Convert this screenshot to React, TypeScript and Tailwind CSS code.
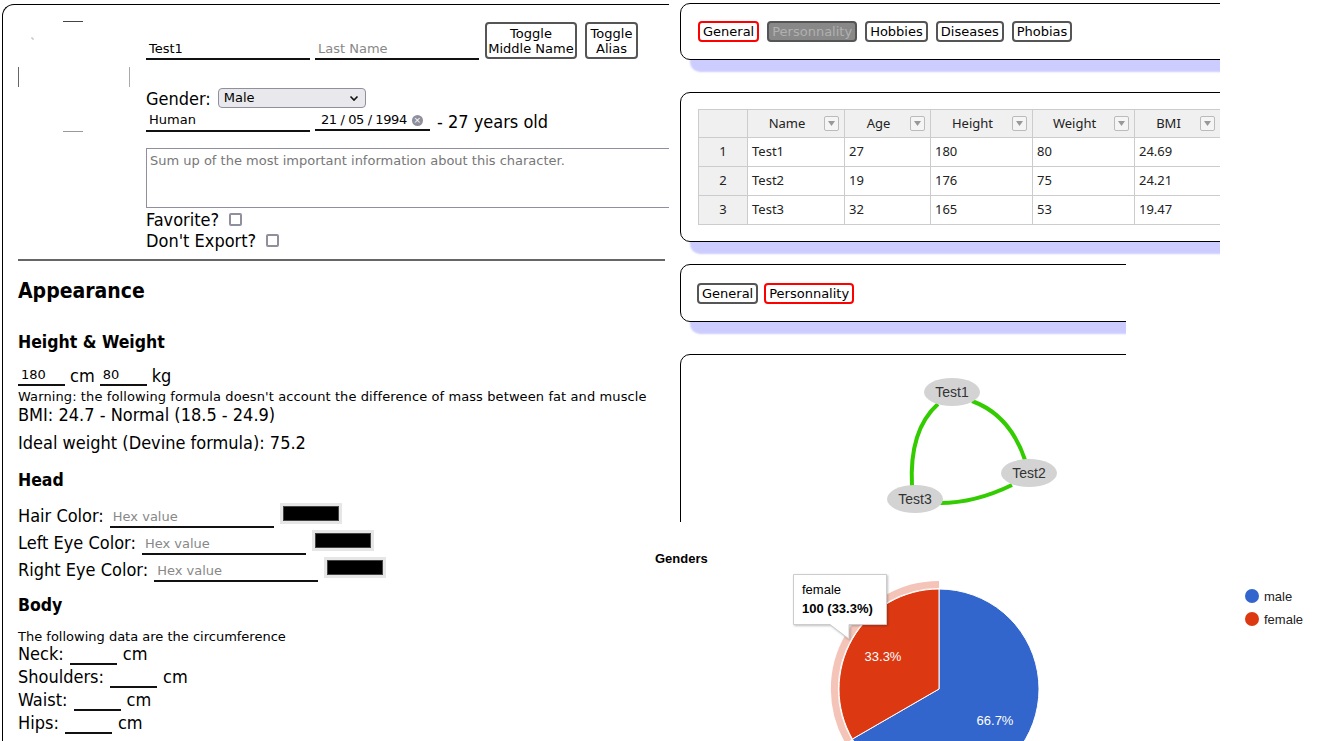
import React from "react";

const ui = "font-['DejaVu_Sans_Condensed','DejaVu_Sans',sans-serif]";
const small = "font-['DejaVu_Sans',sans-serif] text-[13px]";

const people = [
  { id: 1, name: "Test1", age: 27, height: 180, weight: 80, bmi: "24.69" },
  { id: 2, name: "Test2", age: 19, height: 176, weight: 75, bmi: "24.21" },
  { id: 3, name: "Test3", age: 32, height: 165, weight: 53, bmi: "19.47" },
];

export default function App() {
  return (
    <div className={`relative h-[741px] w-[1323px] overflow-hidden bg-white text-black ${ui}`}>
      <div className="flex items-start">
        <CharacterSheet />
        <div className="ml-[11px] flex flex-col">
          <div className="w-[540px] overflow-hidden">
            <Panel className="mt-[3px] h-[57px] items-center gap-[8px] pl-[17px]">
              <Tab active>General</Tab>
              <Tab disabled>Personnality</Tab>
              <Tab>Hobbies</Tab>
              <Tab>Diseases</Tab>
              <Tab>Phobias</Tab>
            </Panel>
            <Panel className="mt-[32px] mb-[22px] h-[150px] items-start pl-[17px] pt-[16px]">
              <PeopleTable />
            </Panel>
          </div>
          <div className="w-[446px] overflow-hidden">
            <Panel className="h-[58px] items-center gap-[6px] pl-[16px]">
              <Tab>General</Tab>
              <Tab active>Personnality</Tab>
            </Panel>
            <Panel className="mt-[32px] h-[200px] items-start">
              <RelationGraph />
            </Panel>
          </div>
        </div>
      </div>
      <GenderChart />
    </div>
  );
}

function Panel({ className, children }: { className: string; children: React.ReactNode }) {
  return (
    <div className={`flex w-[700px] rounded-l-[10px] border border-black bg-white shadow-[10px_12px_2px_#ccccff] ${className}`}>
      {children}
    </div>
  );
}

function Tab({ children, active = false, disabled = false }: { children: React.ReactNode; active?: boolean; disabled?: boolean }) {
  const tone = active
    ? "border-[#ff0000] bg-white text-black"
    : disabled
      ? "border-[#555] bg-[#888] text-[#b0b0b0]"
      : "border-[#555] bg-white text-black";
  return (
    <span className={`h-[21px] rounded-[4px] border-2 px-[3px] leading-[17px] ${small} ${tone}`}>
      {children}
    </span>
  );
}

function CharacterSheet() {
  return (
    <div className="ml-[2px] mt-[4px] h-[737px] w-[667px] shrink-0 overflow-hidden rounded-tl-[12px] border-l border-t border-black pl-[15px] text-[18px]">
      <div className="flex">
        <Avatar />
        <div className="ml-[16px] w-[600px] shrink-0">
          <div className="mt-[17px] flex h-[38px] items-end">
            <LineInput width="w-[164px]" value="Test1" />
            <LineInput width="ml-[5px] w-[164px]" placeholder="Last Name" />
            <button className={`ml-[6px] h-[37px] w-[92px] self-start rounded-[4px] border-2 border-[#555] bg-white leading-[15px] ${small}`}>
              Toggle
              <br />
              Middle Name
            </button>
            <button className={`ml-[8px] h-[37px] w-[53px] self-start rounded-[4px] border-2 border-[#555] bg-white leading-[15px] ${small}`}>
              Toggle
              <br />
              Alias
            </button>
          </div>
          <div className="mt-[28px] flex h-[20px] items-center">
            <span>Gender:</span>
            <div className={`ml-[7px] flex h-[20px] w-[148px] items-center justify-between rounded-[4px] border border-[#8f8f9d] bg-[#e9e9ed] pl-[5px] pr-[6px] ${small}`}>
              <span>Male</span>
              <svg width="10" height="7" viewBox="0 0 10 7">
                <path d="M1.5 1.5 L5 5 L8.5 1.5" fill="none" stroke="#111" strokeWidth="1.6" />
              </svg>
            </div>
          </div>
          <div className="mt-[3px] flex h-[20px] items-center">
            <LineInput width="w-[164px]" value="Human" />
            <div className={`ml-[5px] flex h-[20px] w-[115px] items-center border-b-2 border-[#111] pl-[6px] ${small}`}>
              <span className="whitespace-pre tracking-[-0.4px]">21 / 05 / 1994</span>
              <span className="ml-[5px] flex h-[11px] w-[11px] items-center justify-center rounded-full bg-[#8f8f9d] text-[9px] leading-none text-white">×</span>
            </div>
            <span className="ml-[7px]">- 27 years old</span>
          </div>
          <div className={`mt-[17px] h-[60px] w-[600px] border border-[#8f8f9d] px-[3px] py-[2px] text-[#777] ${small}`}>
            Sum up of the most important information about this character.
          </div>
          <div className="mt-[1px] flex h-[21px] items-center">
            <span>Favorite?</span>
            <Checkbox />
          </div>
          <div className="flex h-[21px] items-center">
            <span>Don't Export?</span>
            <Checkbox />
          </div>
        </div>
      </div>
      <div className="mt-[8px] h-[2px] w-[647px] bg-[#666]" />

      <div className="mt-[17px] h-[26px] text-[21px] font-bold leading-[26px]">Appearance</div>
      <div className="mt-[27px] h-[22px] text-[17.5px] font-bold leading-[22px]">Height &amp; Weight</div>
      <div className="mt-[11px] flex h-[22px] items-end">
        <LineInput width="w-[47px]" value="180" />
        <span className="ml-[5px] self-center">cm</span>
        <LineInput width="ml-[5px] w-[47px]" value="80" />
        <span className="ml-[5px] self-center">kg</span>
      </div>
      <div className={`mt-[3px] h-[16px] leading-[16px] tracking-[0.1px] ${small}`}>
        Warning: the following formula doesn't account the difference of mass between fat and muscle
      </div>
      <div className="h-[20px] leading-[20px]">BMI: 24.7 - Normal (18.5 - 24.9)</div>
      <div className="mt-[8px] h-[20px] leading-[20px]">Ideal weight (Devine formula): 75.2</div>
      <div className="mt-[16px] h-[22px] text-[17.5px] font-bold leading-[22px]">Head</div>
      <ColorRow label="Hair Color:" first />
      <ColorRow label="Left Eye Color:" />
      <ColorRow label="Right Eye Color:" />
      <div className="mt-[12px] h-[22px] text-[17.5px] font-bold leading-[22px]">Body</div>
      <div className={`mt-[13px] h-[13px] leading-[16px] ${small}`}>The following data are the circumference</div>
      {["Neck:", "Shoulders:", "Waist:", "Hips:"].map((label) => (
        <div key={label} className="flex h-[23px] items-end">
          <span className="self-center">{label}</span>
          <LineInput width="ml-[6px] w-[47px]" />
          <span className="ml-[6px] self-center">cm</span>
        </div>
      ))}
    </div>
  );
}

function LineInput({ width, value, placeholder }: { width: string; value?: string; placeholder?: string }) {
  return (
    <div className={`flex h-[21px] shrink-0 items-center border-b-2 border-[#111] px-[3px] ${small} ${width}`}>
      {value ? <span>{value}</span> : <span className="text-[#888]">{placeholder}</span>}
    </div>
  );
}

function Checkbox() {
  return <span className="ml-[10px] h-[13px] w-[13px] rounded-[2px] border-2 border-[#8f8f9d] bg-white" />;
}

function ColorRow({ label, first = false }: { label: string; first?: boolean }) {
  return (
    <div className={`flex h-[25px] items-end ${first ? "mt-[12px]" : "mt-[2px]"}`}>
      <span className="self-center">{label}</span>
      <LineInput width="ml-[6px] w-[164px]" placeholder="Hex value" />
      <div className="ml-[6px] h-[21px] w-[62px] self-start bg-[#e6e6e6] p-[3px]">
        <div className="h-full w-full border border-[#444] bg-black" />
      </div>
    </div>
  );
}

function Avatar() {
  return (
    <div className="mt-[15px] h-[113px] w-[112px] shrink-0">
      <svg width="112" height="113" viewBox="0 0 112 113">
        <path d="M14 17 v2 h2" fill="none" stroke="#bbb" strokeWidth="1" />
        <path d="M45 1.5 H65" stroke="#444" strokeWidth="1" />
        <path d="M45 111.5 H65" stroke="#999" strokeWidth="1" />
        <path d="M0.5 47 V67" stroke="#666" strokeWidth="1" />
        <path d="M111.5 47 V67" stroke="#aaa" strokeWidth="1" />
      </svg>
    </div>
  );
}

function FilterButton() {
  return (
    <span className="absolute right-[5px] top-[6px] flex h-[15px] w-[15px] items-center justify-center rounded-[2px] border border-[#bbb] bg-[#f5f5f5]">
      <svg width="7" height="5" viewBox="0 0 7 5">
        <path d="M0 0 H7 L3.5 5 Z" fill="#999" />
      </svg>
    </span>
  );
}

function PeopleTable() {
  const cols = [
    { label: "Name", w: "w-[97px]" },
    { label: "Age", w: "w-[86px]" },
    { label: "Height", w: "w-[102px]" },
    { label: "Weight", w: "w-[102px]" },
    { label: "BMI", w: "w-[86px]" },
  ];
  return (
    <div className="font-['Noto_Sans',sans-serif] text-[13px] text-[#222]">
      <div className="flex h-[29px] border-y border-[#ccc]">
        <div className="w-[50px] border-x border-[#ccc] bg-[#f0f0f0]" />
        {cols.map((c) => (
          <div key={c.label} className={`relative flex items-center justify-center border-r border-[#ccc] bg-[#f0f0f0] ${c.w}`}>
            <span className="pr-[18px]">{c.label}</span>
            <FilterButton />
          </div>
        ))}
      </div>
      {people.map((p) => (
        <div key={p.id} className="flex h-[29px] border-b border-[#ccc]">
          <div className="flex w-[50px] items-center justify-center border-x border-[#ccc] bg-[#f0f0f0]">{p.id}</div>
          {[p.name, p.age, p.height, p.weight, p.bmi].map((v, i) => (
            <div key={i} className={`flex items-center border-r border-[#ccc] pl-[4px] ${cols[i].w}`}>
              {v}
            </div>
          ))}
        </div>
      ))}
    </div>
  );
}

function RelationGraph() {
  const nodes = [
    { label: "Test1", x: 952, y: 392 },
    { label: "Test2", x: 1029, y: 473 },
    { label: "Test3", x: 915, y: 499 },
  ];
  return (
    <svg width="446" height="198" viewBox="681 355 446 198" className="font-['Liberation_Sans',sans-serif]">
      <g fill="none" stroke="#33cc00" strokeWidth="4">
        <path d="M912 486 Q909 430 938 404" />
        <path d="M972 401 Q1010 415 1025 460" />
        <path d="M1012 485 Q975 503 940 503" />
      </g>
      {nodes.map((n) => (
        <g key={n.label}>
          <ellipse cx={n.x} cy={n.y} rx="28" ry="14" fill="#d3d3d3" />
          <text x={n.x} y={n.y + 5} textAnchor="middle" fontSize="14" fill="#333">
            {n.label}
          </text>
        </g>
      ))}
    </svg>
  );
}

function GenderChart() {
  return (
    <div className="absolute left-[640px] top-[522px] h-[219px] w-[683px] bg-white">
      <svg width="683" height="219" viewBox="640 522 683 219" className="font-['Liberation_Sans',sans-serif]">
        <text x="655" y="563" fontSize="13" fontWeight="bold" fill="#000">
          Genders
        </text>
        <path d="M939 689 L939 589 A100 100 0 1 1 852.4 739 Z" fill="#3366cc" stroke="#fff" strokeWidth="1" />
        <path d="M939 689 L852.4 739 A100 100 0 0 1 939 589 Z" fill="#dc3912" stroke="#fff" strokeWidth="1" />
        <path d="M848.5 741.5 A104.5 104.5 0 0 1 939 584.5" fill="none" stroke="#f5c4b8" strokeWidth="7" />
        <text x="883" y="661" textAnchor="middle" fontSize="13" fill="#fff">
          33.3%
        </text>
        <text x="995" y="725" textAnchor="middle" fontSize="13" fill="#fff">
          66.7%
        </text>
        <g filter="drop-shadow(1px 1px 1px rgba(0,0,0,0.25))">
          <path d="M793.5 574.5 H886.5 V624.5 H849 L849 639 L830 624.5 H793.5 Z" fill="#fff" stroke="#ccc" strokeWidth="1" />
        </g>
        <text x="802" y="594" fontSize="13" fill="#000">
          female
        </text>
        <text x="802" y="613" fontSize="13" fontWeight="bold" fill="#000">
          100 (33.3%)
        </text>
        <circle cx="1252" cy="596" r="7" fill="#3366cc" />
        <text x="1264" y="601" fontSize="13" fill="#222">
          male
        </text>
        <circle cx="1252" cy="619" r="7" fill="#dc3912" />
        <text x="1264" y="624" fontSize="13" fill="#222">
          female
        </text>
      </svg>
    </div>
  );
}
